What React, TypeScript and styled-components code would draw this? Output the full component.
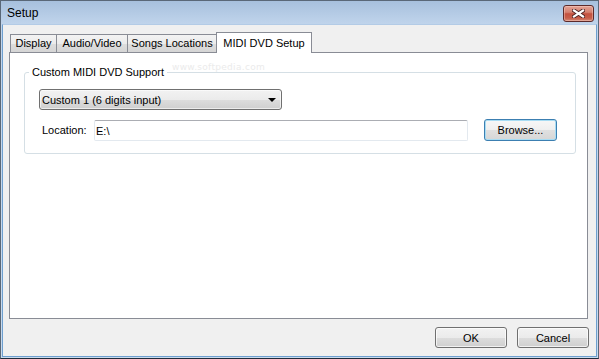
import React from 'react';
import styled, { createGlobalStyle } from 'styled-components';

const GlobalStyle = createGlobalStyle`
  html, body {
    margin: 0;
    padding: 0;
  }
  body {
    width: 599px;
    height: 359px;
    overflow: hidden;
    font-family: "Liberation Sans", Arial, sans-serif;
    font-size: 11px;
    color: #000;
  }
`;

// Window chrome
const Window = styled.div`
  width: 599px;
  height: 359px;
  box-sizing: border-box;
  border: 1px solid #5a6878;
  border-bottom-color: #1f2b3a;
  background: linear-gradient(to bottom, #a7c0dd 0px, #c1d5ec 24px, #c9dbee 100%);
  display: flex;
  flex-direction: column;
  padding: 0 1px 1px 1px;
`;

const TitleBar = styled.div`
  height: 23px;
  box-sizing: border-box;
  display: flex;
  align-items: flex-start;
  justify-content: space-between;
  padding: 4px 3px 0 5px;
`;

const Title = styled.span`
  font-family: "Liberation Sans", Arial, sans-serif;
  font-size: 12px;
  line-height: 17px;
  color: #000;
`;

const CloseButton = styled.div`
  width: 31px;
  height: 17px;
  box-sizing: border-box;
  border: 1px solid #5c2a2a;
  border-radius: 3px;
  background: linear-gradient(to bottom, #e3a396 0%, #d4806f 42%, #c4513f 52%, #c75e4a 80%, #d58a77 100%);
  box-shadow: inset 0 0 0 1px rgba(255, 220, 210, 0.4);
  display: flex;
  align-items: center;
  justify-content: center;
`;

const Client = styled.div`
  flex: 1;
  display: flex;
  flex-direction: column;
  background: #f0f0f0;
  border: 1px solid #6e9fcf;
  border-top-color: #b3cbe6;
  padding: 7px 8px 8px 6px;
`;

// Tabs
const TabRow = styled.div`
  height: 20px;
  display: flex;
  align-items: flex-end;
  padding-left: 1px;
`;

const Tab = styled.div<{ $active?: boolean; $width: number }>`
  position: relative;
  box-sizing: border-box;
  width: ${({ $width }) => $width}px;
  height: ${({ $active }) => ($active ? 21 : 18)}px;
  margin-left: -1px;
  margin-bottom: ${({ $active }) => ($active ? -1 : 0)}px;
  z-index: ${({ $active }) => ($active ? 2 : 1)};
  border: 1px solid #898c95;
  border-bottom: none;
  background: ${({ $active }) =>
    $active
      ? '#ffffff'
      : 'linear-gradient(to bottom, #f3f3f3 0%, #ebebeb 50%, #dddddd 51%, #d5d5d5 100%)'};
  display: flex;
  align-items: ${({ $active }) => ($active ? 'flex-start' : 'center')};
  padding-top: ${({ $active }) => ($active ? 4 : 0)}px;
  justify-content: center;
  white-space: nowrap;
  line-height: 13px;

  &:first-child {
    margin-left: 0;
  }
`;

const Panel = styled.div`
  position: relative;
  height: 267px;
  box-sizing: border-box;
  background: #ffffff;
  border: 1px solid #898c95;
  padding: 19px 11px 0 14px;
`;

const Watermark = styled.span`
  position: absolute;
  left: 162px;
  top: 9px;
  font-family: "DejaVu Sans", sans-serif;
  font-size: 9px;
  letter-spacing: 0.3px;
  color: #ebebeb;
`;

// Group box
const GroupBox = styled.div`
  position: relative;
  border: 1px solid #d5dfe5;
  border-radius: 3px;
  padding: 16px 14px 12px 14px;
`;

const Legend = styled.span`
  position: absolute;
  top: -7px;
  left: 4px;
  padding: 0 3px;
  background: #ffffff;
  line-height: 13px;
`;

const Select = styled.div`
  width: 243px;
  height: 21px;
  box-sizing: border-box;
  border: 1px solid #707070;
  border-radius: 3px;
  background: linear-gradient(to bottom, #f2f2f2 0%, #ebebeb 50%, #dddddd 51%, #cfcfcf 100%);
  box-shadow: inset 0 0 0 1px rgba(255, 255, 255, 0.6);
  display: flex;
  align-items: center;
  justify-content: space-between;
  padding: 0 5px 0 2px;
`;

const Arrow = styled.span`
  width: 0;
  height: 0;
  border-left: 4px solid transparent;
  border-right: 4px solid transparent;
  border-top: 4px solid #000;
  margin-top: 1px;
`;

const FieldRow = styled.div`
  display: flex;
  align-items: flex-end;
  margin-top: 9px;
`;

const Label = styled.span`
  width: 52px;
  padding-left: 3px;
  line-height: 21px;
`;

const TextBox = styled.div`
  width: 374px;
  height: 21px;
  box-sizing: border-box;
  border: 1px solid #e3e9ef;
  border-top-color: #abadb3;
  border-radius: 2px;
  background: #fff;
  padding-left: 1px;
  display: flex;
  align-items: center;
`;

const Button = styled.div<{ $default?: boolean; $width: number; $height: number }>`
  width: ${({ $width }) => $width}px;
  height: ${({ $height }) => $height}px;
  box-sizing: border-box;
  border: 1px solid ${({ $default }) => ($default ? '#3c7fb1' : '#707070')};
  border-radius: 3px;
  background: linear-gradient(to bottom, #f2f2f2 0%, #ebebeb 50%, #dddddd 51%, #cfcfcf 100%);
  box-shadow: inset 0 0 0 1px rgba(255, 255, 255, 0.7);
  display: flex;
  align-items: center;
  justify-content: center;
`;

const BrowseButton = styled(Button)`
  margin-left: 16px;
  background: linear-gradient(to bottom, #f7f7f7 0%, #efefef 50%, #e0e0e0 51%, #d6d6d6 100%);
  box-shadow: inset 0 0 0 1px #a8dcf3;
`;

const Footer = styled.div`
  display: flex;
  justify-content: flex-end;
  gap: 10px;
  margin-top: 8px;
  margin-right: -1px;
`;

const CloseIcon = () => (
  <svg width="13" height="9" viewBox="0 0 13 9">
    <path d="M2 1.5 L11 7.5 M11 1.5 L2 7.5" stroke="#4a2020" strokeWidth="4" strokeLinecap="square" />
    <path d="M2 1.5 L11 7.5 M11 1.5 L2 7.5" stroke="#ffffff" strokeWidth="2.2" strokeLinecap="square" />
  </svg>
);

const tabs = [
  { label: 'Display', width: 47 },
  { label: 'Audio/Video', width: 72 },
  { label: 'Songs Locations', width: 90 },
  { label: 'MIDI DVD Setup', width: 96, active: true },
];

const App = () => {
  return (
    <>
      <GlobalStyle />
      <Window>
        <TitleBar>
          <Title>Setup</Title>
          <CloseButton>
            <CloseIcon />
          </CloseButton>
        </TitleBar>

        <Client>
          <TabRow>
            {tabs.map((t) => (
              <Tab key={t.label} $active={t.active} $width={t.width}>
                {t.label}
              </Tab>
            ))}
          </TabRow>

          <Panel>
            <Watermark>www.softpedia.com</Watermark>
            <GroupBox>
              <Legend>Custom MIDI DVD Support</Legend>
              <Select>
                <span>Custom 1 (6 digits input)</span>
                <Arrow />
              </Select>
              <FieldRow>
                <Label>Location:</Label>
                <TextBox>E:\</TextBox>
                <BrowseButton $default $width={73} $height={22}>
                  Browse...
                </BrowseButton>
              </FieldRow>
            </GroupBox>
          </Panel>

          <Footer>
            <Button $width={72} $height={21}>OK</Button>
            <Button $width={72} $height={21}>Cancel</Button>
          </Footer>
        </Client>
      </Window>
    </>
  );
};

export default App;
